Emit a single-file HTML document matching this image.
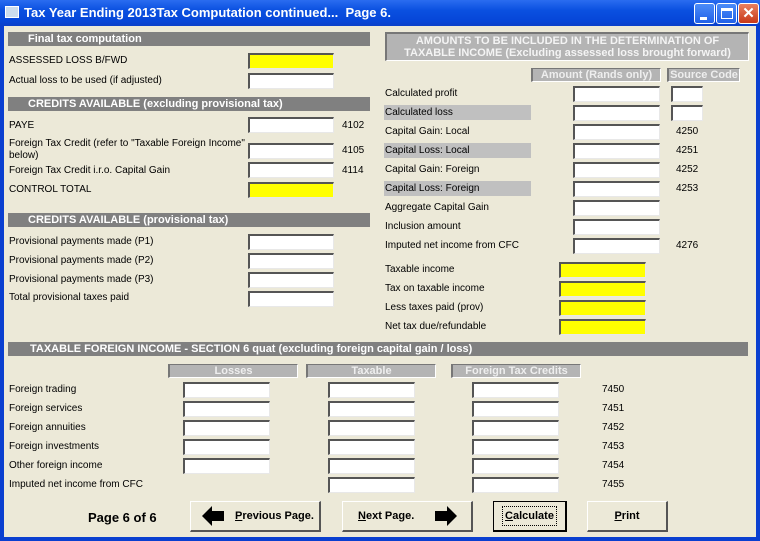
<!DOCTYPE html>
<html><head><meta charset="utf-8"><style>
*{margin:0;padding:0;box-sizing:border-box}
body{width:760px;height:541px;overflow:hidden;background:#0a3fd0;font-family:"Liberation Sans",Arial,sans-serif;font-size:10px;color:#000;position:relative}
#win{position:absolute;left:4px;top:26px;width:752px;height:511px;background:#ece9d8}
#title{position:absolute;left:0;top:0;width:760px;height:26px;background:linear-gradient(#2a6cf0,#0a50e0 40%,#0646d8 80%,#0a3fc8);color:#fff;font-weight:bold;font-size:13px;line-height:26px;padding-left:24px}
.a{position:absolute;white-space:nowrap;margin-top:1px}
.hd{position:absolute;background:#808080;color:#fff;font-weight:bold;font-size:11px;height:14px;line-height:14px}
.in{position:absolute;height:16px;background:#fff;border-top:2px solid #555;border-left:2px solid #555;border-right:1px solid #e8e8e8;border-bottom:1px solid #e8e8e8}
.y{background:#ffff00}
.ch{position:absolute;background:#b4b4b4;color:#eee;font-weight:bold;font-size:11px;height:14px;line-height:13px;text-align:center;border-top:1px solid #777;border-left:2px solid #777;border-right:1px solid #fff;border-bottom:1px solid #fff}
.sh{position:absolute;background:#c0c0c0;height:15px}
.btn{position:absolute;height:31px;background:#ece9d8;border-top:1px solid #fff;border-left:1px solid #fff;border-right:2px solid #555;border-bottom:2px solid #555;font-weight:bold;font-size:11px;display:flex;align-items:center;justify-content:center}
.tb{position:absolute;top:3px;width:21px;height:21px;border:1px solid #fff;border-radius:3px;background:linear-gradient(#4c8cf8,#2060e8)}
</style></head><body>
<div id="title">Tax Year Ending 2013Tax Computation continued...&nbsp; Page 6.</div>
<div style="position:absolute;left:5px;top:6px;width:14px;height:12px;background:#cde;border:1px solid #fff"></div>
<div class="tb" style="left:694px"><div style="position:absolute;left:5px;top:13px;width:7px;height:3px;background:#fff"></div></div>
<div class="tb" style="left:716px"><div style="position:absolute;left:4px;top:4px;width:12px;height:11px;border:1px solid #fff;border-top-width:3px"></div></div>
<div class="tb" style="left:738px;background:linear-gradient(#e88060,#c83818)"><div style="position:absolute;left:0;top:0;width:19px;height:19px;color:#fff;font-weight:bold;font-size:15px;text-align:center;line-height:19px">✕</div></div>
<div id="win">
<div style="position:absolute;left:-4px;top:0;width:760px;height:515px">
<div class="hd" style="left:8px;top:6px;width:362px;padding-left:20px">Final tax computation</div>
<div class="a" style="left:9px;top:28px">ASSESSED LOSS B/FWD</div><div class="in y" style="left:248px;top:27px;width:86px"></div>
<div class="a" style="left:9px;top:48px">Actual loss to be used (if adjusted)</div><div class="in" style="left:248px;top:47px;width:86px"></div>
<div class="hd" style="left:8px;top:71px;width:362px;padding-left:20px">CREDITS AVAILABLE (excluding provisional tax)</div>
<div class="a" style="left:9px;top:93px">PAYE</div><div class="in" style="left:248px;top:91px;width:86px"></div><div class="a" style="left:342px;top:93px">4102</div>
<div class="a" style="left:9px;top:111px;line-height:12px;white-space:normal;width:236px">Foreign Tax Credit (refer to "Taxable Foreign Income" below)</div><div class="in" style="left:248px;top:117px;width:86px"></div><div class="a" style="left:342px;top:118px">4105</div>
<div class="a" style="left:9px;top:138px">Foreign Tax Credit i.r.o. Capital Gain</div><div class="in" style="left:248px;top:136px;width:86px"></div><div class="a" style="left:342px;top:138px">4114</div>
<div class="a" style="left:9px;top:157px">CONTROL TOTAL</div><div class="in y" style="left:248px;top:156px;width:86px"></div>
<div class="hd" style="left:8px;top:187px;width:362px;padding-left:20px">CREDITS AVAILABLE (provisional tax)</div>
<div class="a" style="left:9px;top:209px">Provisional payments made (P1)</div><div class="in" style="left:248px;top:208px;width:86px"></div>
<div class="a" style="left:9px;top:228px">Provisional payments made (P2)</div><div class="in" style="left:248px;top:227px;width:86px"></div>
<div class="a" style="left:9px;top:247px">Provisional payments made (P3)</div><div class="in" style="left:248px;top:246px;width:86px"></div>
<div class="a" style="left:9px;top:265px">Total provisional taxes paid</div><div class="in" style="left:248px;top:265px;width:86px"></div>
<div style="position:absolute;left:385px;top:6px;width:364px;height:29px;background:#b4b4b4;border-top:2px solid #777;border-left:2px solid #777;border-right:1px solid #fff;border-bottom:1px solid #fff;color:#f4f4f4;font-weight:bold;font-size:11px;line-height:12px;text-align:center;padding-top:1px">AMOUNTS TO BE INCLUDED IN THE DETERMINATION OF<br>TAXABLE INCOME (Excluding assessed loss brought forward)</div>
<div class="ch" style="left:531px;top:42px;width:130px">Amount (Rands only)</div>
<div class="ch" style="left:667px;top:42px;width:73px">Source Code</div>
<div class="sh" style="left:384px;top:79px;width:147px"></div>
<div class="sh" style="left:384px;top:117px;width:147px"></div>
<div class="sh" style="left:384px;top:155px;width:147px"></div>
<div class="a" style="left:385px;top:61px">Calculated profit</div><div class="in" style="left:573px;top:60px;width:87px"></div><div class="in" style="left:671px;top:60px;width:32px"></div>
<div class="a" style="left:385px;top:80px">Calculated loss</div><div class="in" style="left:573px;top:79px;width:87px"></div><div class="in" style="left:671px;top:79px;width:32px"></div>
<div class="a" style="left:385px;top:99px">Capital Gain: Local</div><div class="in" style="left:573px;top:98px;width:87px"></div><div class="a" style="left:676px;top:99px">4250</div>
<div class="a" style="left:385px;top:118px">Capital Loss: Local</div><div class="in" style="left:573px;top:117px;width:87px"></div><div class="a" style="left:676px;top:118px">4251</div>
<div class="a" style="left:385px;top:137px">Capital Gain: Foreign</div><div class="in" style="left:573px;top:136px;width:87px"></div><div class="a" style="left:676px;top:137px">4252</div>
<div class="a" style="left:385px;top:156px">Capital Loss: Foreign</div><div class="in" style="left:573px;top:155px;width:87px"></div><div class="a" style="left:676px;top:156px">4253</div>
<div class="a" style="left:385px;top:175px">Aggregate Capital Gain</div><div class="in" style="left:573px;top:174px;width:87px"></div>
<div class="a" style="left:385px;top:194px">Inclusion amount</div><div class="in" style="left:573px;top:193px;width:87px"></div>
<div class="a" style="left:385px;top:213px">Imputed net income from CFC</div><div class="in" style="left:573px;top:212px;width:87px"></div><div class="a" style="left:676px;top:213px">4276</div>
<div class="a" style="left:385px;top:237px">Taxable income</div><div class="in y" style="left:559px;top:236px;width:87px"></div>
<div class="a" style="left:385px;top:256px">Tax on taxable income</div><div class="in y" style="left:559px;top:255px;width:87px"></div>
<div class="a" style="left:385px;top:275px">Less taxes paid (prov)</div><div class="in y" style="left:559px;top:274px;width:87px"></div>
<div class="a" style="left:385px;top:294px">Net tax due/refundable</div><div class="in y" style="left:559px;top:293px;width:87px"></div>
<div class="hd" style="left:8px;top:316px;width:740px;padding-left:22px">TAXABLE FOREIGN INCOME - SECTION 6 quat (excluding foreign capital gain / loss)</div>
<div class="ch" style="left:168px;top:338px;width:130px">Losses</div>
<div class="ch" style="left:306px;top:338px;width:130px">Taxable</div>
<div class="ch" style="left:451px;top:338px;width:130px">Foreign Tax Credits</div>
<div class="a" style="left:9px;top:357px">Foreign trading</div>
<div class="a" style="left:9px;top:376px">Foreign services</div>
<div class="a" style="left:9px;top:395px">Foreign annuities</div>
<div class="a" style="left:9px;top:414px">Foreign investments</div>
<div class="a" style="left:9px;top:433px">Other foreign income</div>
<div class="a" style="left:9px;top:452px">Imputed net income from CFC</div>
<div class="in" style="left:183px;top:356px;width:87px"></div><div class="in" style="left:328px;top:356px;width:87px"></div><div class="in" style="left:472px;top:356px;width:87px"></div><div class="a" style="left:602px;top:357px">7450</div>
<div class="in" style="left:183px;top:375px;width:87px"></div><div class="in" style="left:328px;top:375px;width:87px"></div><div class="in" style="left:472px;top:375px;width:87px"></div><div class="a" style="left:602px;top:376px">7451</div>
<div class="in" style="left:183px;top:394px;width:87px"></div><div class="in" style="left:328px;top:394px;width:87px"></div><div class="in" style="left:472px;top:394px;width:87px"></div><div class="a" style="left:602px;top:395px">7452</div>
<div class="in" style="left:183px;top:413px;width:87px"></div><div class="in" style="left:328px;top:413px;width:87px"></div><div class="in" style="left:472px;top:413px;width:87px"></div><div class="a" style="left:602px;top:414px">7453</div>
<div class="in" style="left:183px;top:432px;width:87px"></div><div class="in" style="left:328px;top:432px;width:87px"></div><div class="in" style="left:472px;top:432px;width:87px"></div><div class="a" style="left:602px;top:433px">7454</div>
<div class="in" style="left:328px;top:451px;width:87px"></div><div class="in" style="left:472px;top:451px;width:87px"></div><div class="a" style="left:602px;top:452px">7455</div>
<div class="a" style="left:88px;top:483px;font-weight:bold;font-size:13px">Page 6 of 6</div>
<div class="btn" style="left:190px;top:475px;width:131px;justify-content:flex-start;padding-left:10px">
<svg width="24" height="22" viewBox="0 0 24 22"><path d="M1 11 L11 1 V6 H23 V16 H11 V21 Z" fill="#000"/></svg>
<span style="margin-left:10px"><u>P</u>revious Page.</span></div>
<div class="btn" style="left:342px;top:475px;width:131px;justify-content:flex-start;padding-left:15px">
<span><u>N</u>ext Page.</span>
<svg style="margin-left:20px" width="24" height="22" viewBox="0 0 24 22"><path d="M23 11 L13 1 V6 H1 V16 H13 V21 Z" fill="#000"/></svg></div>
<div class="btn" style="left:493px;top:475px;width:74px;border:1px solid #000;border-right:2px solid #000;border-bottom:2px solid #000"><div style="border:1px dotted #000;padding:3px 2px;font-size:11px"><u>C</u>alculate</div></div>
<div class="btn" style="left:587px;top:475px;width:81px"><span><u>P</u>rint</span></div>
</div>
</div>
</body></html>
